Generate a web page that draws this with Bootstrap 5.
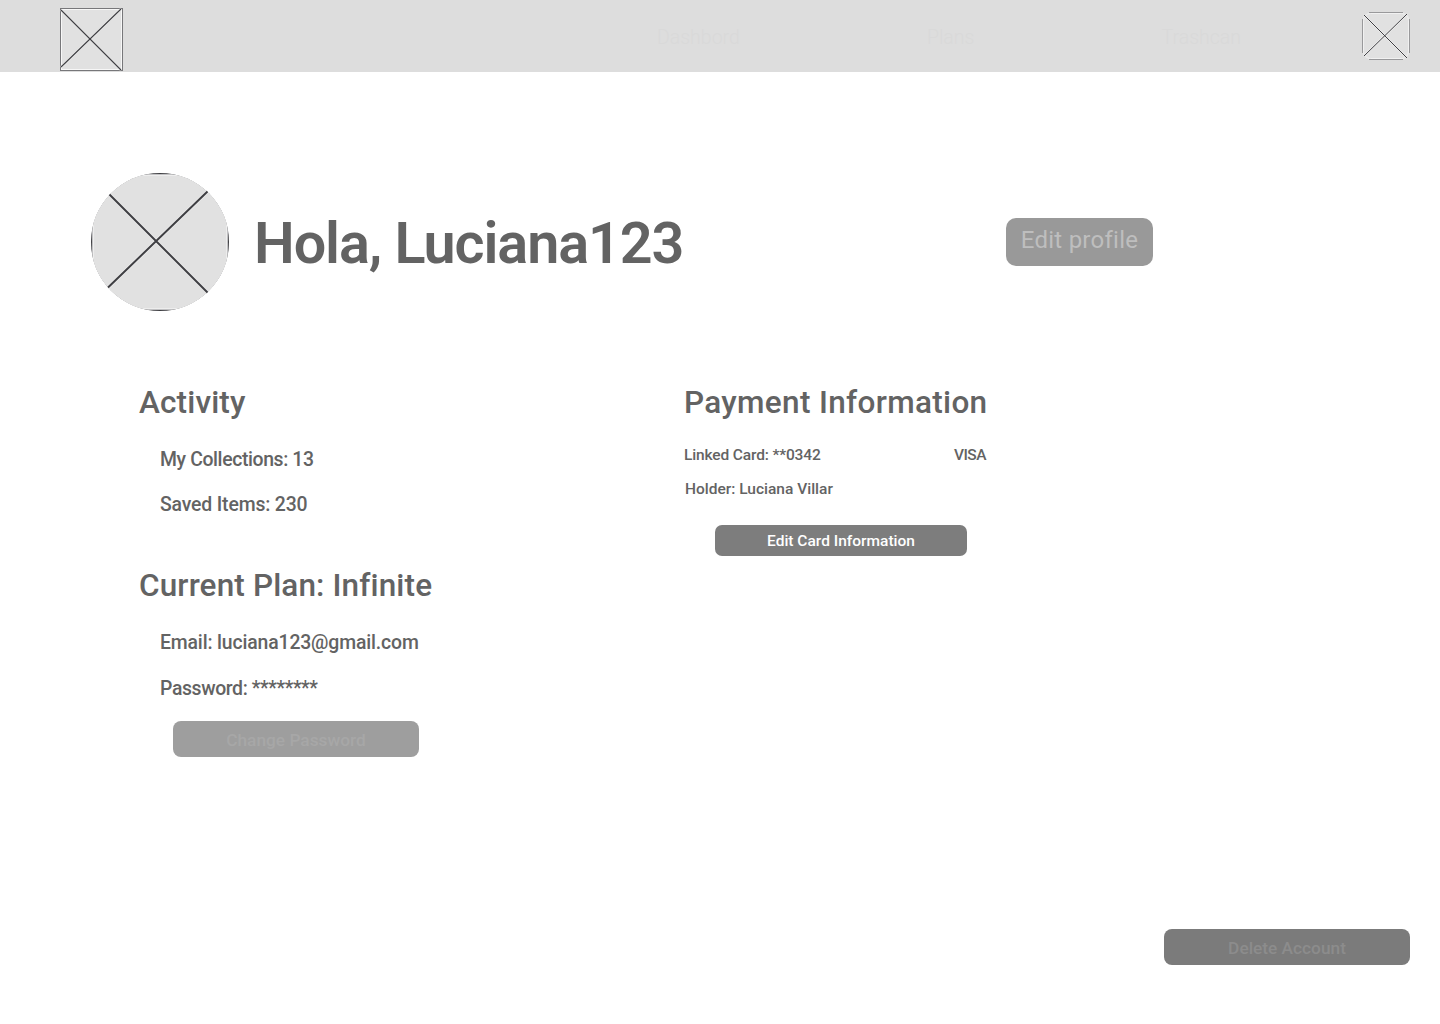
<!DOCTYPE html>
<html lang="en">
<head>
<meta charset="utf-8">
<meta name="viewport" content="width=device-width, initial-scale=1">
<title>Profile</title>
<link href="https://cdn.jsdelivr.net/npm/bootstrap@5.3.0/dist/css/bootstrap.min.css" rel="stylesheet">
<style>
body{font-family:Roboto,"Noto Sans",sans-serif;font-weight:500;color:#636363;background:#fff}
.page{min-height:1024px}
.topbar{height:72px;background:#ddd;padding:0 30px 0 60px}
.topbar .logo{margin-top:7px}
.topbar .links{width:584px;margin-right:121px;padding-top:3px}
.topbar .links a{color:#d9d9d9;font-size:19.5px;font-weight:300;line-height:24px;text-decoration:none}
.hero{margin-top:101px;padding-left:91px;height:138px}
.hero h1{font-size:57.5px;line-height:66px;letter-spacing:-1.08px;font-weight:600;margin:4px 0 0 25px;width:752px}
.btn{border:0;padding:0;font-weight:500;--bs-btn-border-radius:8px}
.btn-profile{width:147px;height:48px;border-radius:10px;background:#999;color:#bebebe;font-size:24px;font-weight:400;line-height:44px;letter-spacing:.25px;padding-bottom:4px}
.details{padding:72px 0 0 139px}
.col-left{width:545px}
.col-right{width:304px}
h2{font-size:31.5px;line-height:40px;font-weight:500;margin:0;letter-spacing:.14px;white-space:nowrap}
.col-right h2{letter-spacing:.33px}
.facts{padding:25px 0 0 21px;font-size:19.4px;line-height:24px;letter-spacing:-.15px}
.facts .tight{letter-spacing:-.38px}
.fact-saved{margin-top:21px}
.fact-pass{margin-top:22px}
.plan{margin-top:49px}
.card-info{padding-top:22px;font-size:15.5px;line-height:20px}
.card-number{letter-spacing:-.14px}
.card-brand{letter-spacing:-.5px;padding-right:2px}
.card-holder{margin:14px 0 0 1px}
.btn-card{width:252px;height:31px;border-radius:7px;background:#7d7d7d;color:#fff;font-size:15.5px;line-height:33px;margin:26px 0 0 31px}
.btn-wide{width:246px;height:36px;font-size:17.3px;line-height:38px}
.btn-pass{background:#9e9e9e;color:#a7a7a7;margin:20px 0 0 34px}
.btn-del{background:#7b7b7b;color:#8c8c8c;margin:0 30px 59px 0}
</style>
</head>
<body>
<div class="page d-flex flex-column">
  <nav class="topbar d-flex align-items-center">
    <svg class="logo" width="63" height="64" viewBox="0 0 63 64">
      <rect x=".5" y=".5" width="62" height="62" fill="#e1e1e1" stroke="#77777a"/>
      <rect x="1.5" y="1.5" width="60" height="60" fill="none" stroke="#f7f7f7"/>
      <path d="M1 2 61 62M61 1 1 59" stroke="#ececec" stroke-width="2.4"/>
      <path d="M1 2 61 62M61 1 1 59" stroke="#3f3f43" stroke-width="1.1"/>
    </svg>
    <div class="links d-flex justify-content-between ms-auto">
      <a href="#">Dashbord</a><a href="#">Plans</a><a href="#">Trashcan</a>
    </div>
    <svg width="48" height="48" viewBox="0 0 48 48">
      <rect x=".5" y=".5" width="47" height="47" rx="8" fill="#e1e1e1"/>
      <rect x="1.500" y="1.500" width="45" height="45" rx="7" fill="none" stroke="#f1f1f1"/>
      <path d="M7 .5H41M7 47.5H41M.5 7V41M47.5 7V41" stroke="#99999b"/>
      <path d="M2 3 45 46M45 2 2 44" stroke="#ececec" stroke-width="2.400"/>
      <path d="M2 3 45 46M45 2 2 44" stroke="#3f3f43" stroke-width="1"/>
    </svg>
  </nav>

  <header class="hero d-flex align-items-center">
    <svg class="flex-shrink-0" width="138" height="138" viewBox="0 0 138 138">
      <defs><clipPath id="disc"><circle cx="69" cy="69" r="69"/></clipPath></defs>
      <g clip-path="url(#disc)">
        <rect width="138" height="138" fill="#3f3f43"/>
        <rect x="1.3" y="1.3" width="135.4" height="135.4" fill="#f8f8f8"/>
        <rect x="2.5" y="2.5" width="133" height="133" fill="#e1e1e1"/>
      </g>
      <path d="M18.5 21.5 116.5 119.500M116.500 18.500 17 114.500" stroke="#ebebeb" stroke-width="3.6"/>
      <path d="M18.500 21.500 116.500 119.500M116.500 18.500 17 114.500" stroke="#3f3f43" stroke-width="2"/>
    </svg>
    <h1>Hola, Luciana123</h1>
    <button class="btn btn-profile" type="button">Edit profile</button>
  </header>

  <main class="details d-flex align-items-start">
    <div class="col-left">
      <section>
        <h2>Activity</h2>
        <div class="facts d-flex flex-column">
          <div class="tight">My Collections: 13</div>
          <div class="fact-saved">Saved Items: 230</div>
        </div>
      </section>
      <section class="plan">
        <h2>Current Plan: Infinite</h2>
        <div class="facts d-flex flex-column">
          <div>Email: luciana123@gmail.com</div>
          <div class="tight fact-pass">Password: ********</div>
        </div>
        <button class="btn btn-wide btn-pass" type="button">Change Password</button>
      </section>
    </div>
    <section class="col-right">
      <h2>Payment Information</h2>
      <div class="card-info">
        <div class="d-flex justify-content-between"><span class="card-number">Linked Card: **0342</span><span class="card-brand">VISA</span></div>
        <div class="card-holder">Holder: Luciana Villar</div>
      </div>
      <button class="btn btn-card" type="button">Edit Card Information</button>
    </section>
  </main>

  <button class="btn btn-wide btn-del mt-auto align-self-end" type="button">Delete Account</button>
</div>
<script src="https://cdn.jsdelivr.net/npm/bootstrap@5.3.0/dist/js/bootstrap.bundle.min.js"></script>
</body>
</html>
